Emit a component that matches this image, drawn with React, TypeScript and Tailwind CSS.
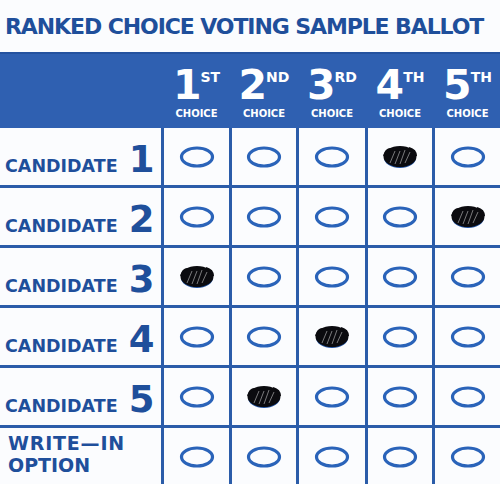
import React from 'react';

const choices = [
    { n: '1', sup: 'ST' },
    { n: '2', sup: 'ND' },
    { n: '3', sup: 'RD' },
    { n: '4', sup: 'TH' },
    { n: '5', sup: 'TH' },
];

// which choice column is marked for each row (-1 = none)
const rows = [
    { label: 'CANDIDATE', num: '1', marked: 3 },
    { label: 'CANDIDATE', num: '2', marked: 4 },
    { label: 'CANDIDATE', num: '3', marked: 0 },
    { label: 'CANDIDATE', num: '4', marked: 2 },
    { label: 'CANDIDATE', num: '5', marked: 1 },
    { label: 'WRITE', num: '', marked: -1 },
];

const Oval = ({ filled }: { filled: boolean }) =>
    filled ? (
        <svg width="38" height="26" viewBox="0 0 38 26">
            <ellipse cx="19" cy="14" rx="16" ry="10" fill="#1d4f9f" />
            <ellipse cx="19" cy="12.5" rx="16.5" ry="10.5" fill="#0b0b0f" />
            <path d="M9 19 L14 7 M14 20 L19 7 M19 20 L24 6 M24 19 L29 8" stroke="#ffffff" strokeWidth="0.9" opacity="0.5" />
            <path d="M3 12 Q5 4 11 5 M28 4 Q35 6 35 12" stroke="#0b0b0f" strokeWidth="2" fill="none" />
        </svg>
    ) : (
        <svg width="38" height="26" viewBox="0 0 38 26">
            <ellipse cx="19" cy="13" rx="15.5" ry="9" fill="none" stroke="#2a63b9" strokeWidth="3.2" />
        </svg>
    );

const grid = 'grid grid-cols-[161px_65px_64px_66px_64px_1fr] gap-x-[3px]';

export default function App() {
    return (
        <div className="w-[500px] h-[484px] bg-[#fbfcfe] overflow-hidden" style={{ fontFamily: '"DejaVu Sans", sans-serif' }}>
            <div className="h-[52px] flex items-center pl-[5px]">
                <h1 className="text-[22px] font-bold tracking-[-1.1px] text-[#1f4f9b] leading-none pt-[2px]">
                    RANKED CHOICE VOTING SAMPLE BALLOT
                </h1>
            </div>

            <div className={`${grid} h-[76px] bg-[#2f60b1] border-t-2 border-[#24529f]`}>
                <div />
                {choices.map((c) => (
                    <div key={c.n + c.sup} className="flex flex-col items-center justify-center text-white pt-[1px]">
                        <div className="flex items-start leading-none">
                            <span className="text-[41px] font-bold leading-none tracking-[-1px]">{c.n}</span>
                            <span className="text-[14px] font-bold leading-none mt-[5px]">{c.sup}</span>
                        </div>
                        <span className="text-[10px] font-bold leading-none mt-[3px]">CHOICE</span>
                    </div>
                ))}
            </div>

            <div className={`${grid} gap-y-[3px] bg-[#2b5ca9]`}>
                {rows.map((r, i) => (
                    <React.Fragment key={i}>
                        <div className="h-[57px] bg-[#fbfcfe] flex items-center pl-[5px] text-[#1f4f9b] font-bold">
                            {r.num ? (
                                <div className="flex items-end gap-[11px] pt-[5px]">
                                    <span className="text-[17.5px] leading-none mb-[2px]">{r.label}</span>
                                    <span className="text-[37px] leading-none">{r.num}</span>
                                </div>
                            ) : (
                                <div className="flex flex-col text-[19px] leading-[22px] pl-[3px] pb-[5px]">
                                    <span className="tracking-[0.8px]">WRITE—IN</span>
                                    <span>OPTION</span>
                                </div>
                            )}
                        </div>
                        {choices.map((c, j) => (
                            <div key={j} className="h-[57px] bg-[#fbfcfe] flex items-center justify-center">
                                <Oval filled={r.marked === j} />
                            </div>
                        ))}
                    </React.Fragment>
                ))}
            </div>
        </div>
    );
}
